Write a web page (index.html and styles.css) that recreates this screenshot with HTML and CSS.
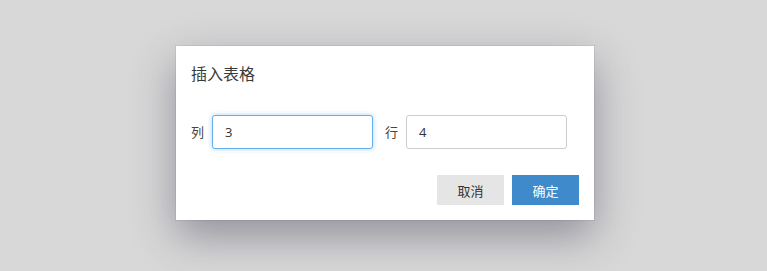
FILE: index.html
```html
<!DOCTYPE html>
<html lang="zh-CN">
<head>
  <meta charset="UTF-8">
  <title>插入表格</title>
  <link rel="stylesheet" href="styles.css">
</head>
<body>
  <div class="dialog">
    <div class="dialog-title">插入表格</div>
    <div class="dialog-body">
      <label class="field-label" for="cols">列</label>
      <input class="field-input focus" id="cols" type="text" value="3">
      <label class="field-label" for="rows">行</label>
      <input class="field-input" id="rows" type="text" value="4">
    </div>
    <div class="dialog-footer">
      <button class="btn btn-cancel" type="button">取消</button>
      <button class="btn btn-ok" type="button">确定</button>
    </div>
  </div>
</body>
</html>
```

FILE: styles.css
```css
/* 页面 */
html, body { height: 100%; }
body { margin: 0; padding-top: 46px; box-sizing: border-box; background: #d8d8d8; font-family: "Open Sans", "Noto Sans CJK SC", sans-serif; color: #333; }
/* 弹窗 */
.dialog { width: 418px; margin-left: 176px; background: #fff; box-shadow: 0 0 0 1px rgba(0,0,0,0.06), 0 16px 40px rgba(60,55,80,0.45); box-sizing: border-box; }
.dialog-title { padding: 16px 15px 0; font-size: 16px; line-height: 24px; height: 24px; color: #3a3a3a; }
.dialog-body { display: flex; align-items: center; padding: 29px 15px 0; }
.field-label { font-size: 13px; line-height: 34px; margin-right: 8px; color: #444; }
.field-input { width: 161px; height: 34px; box-sizing: border-box; padding: 0 12px; border: 1px solid #ccc; border-radius: 3px; font-family: inherit; font-size: 13px; color: #333; outline: none; margin-right: 12px; }
.field-input.focus { border-color: #66afe9; box-shadow: 0 0 5px rgba(102,175,233,0.55); }
/* 按钮 */
.dialog-footer { display: flex; justify-content: flex-end; gap: 8px; padding: 26px 15px 15px; }
.btn { width: 67px; height: 30px; border: none; font-family: inherit; font-size: 13px; cursor: pointer; padding: 0; }
.btn-cancel { background: #e5e5e5; color: #333; }
.btn-ok { background: #3f8acb; color: #fff; }
```
